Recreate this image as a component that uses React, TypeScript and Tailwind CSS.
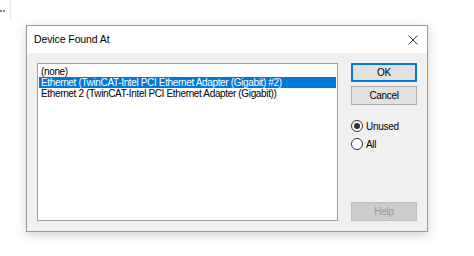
import React from "react";

const items = [
  "(none)",
  "Ethernet (TwinCAT-Intel PCI Ethernet Adapter (Gigabit) #2)",
  "Ethernet 2 (TwinCAT-Intel PCI Ethernet Adapter (Gigabit))",
];

function Radio({ checked, label }: { checked: boolean; label: string }) {
  return (
    <div className="flex h-[18px] items-center">
      <div className="flex h-[12px] w-[12px] items-center justify-center rounded-full border border-[#333333] bg-white">
        {checked && <div className="h-[6px] w-[6px] rounded-full bg-[#333333]" />}
      </div>
      <span className="ml-[3px] text-[10px] leading-[11px] tracking-[-0.3px] text-black">{label}</span>
    </div>
  );
}

export default function App() {
  return (
    <div
      className="h-[256px] w-[474px] overflow-hidden bg-white"
      style={{ fontFamily: '"Liberation Sans", Arial, sans-serif' }}
    >
      <div className="flex h-[25px]">
        <div className="flex h-[21px] w-[10px] items-center">
          <div className="h-[2px] w-[5px] border-l-2 border-r-2 border-[#7a7a90]" />
        </div>
        <div className="h-[21px] w-px bg-[#e8e8e8]" />
      </div>
      <div className="ml-[26px] flex h-[207px] w-[402px] flex-col border border-[#9a9a9a] bg-white shadow-[0_3px_10px_rgba(0,0,0,0.18)]">
        <div className="flex h-[27px] items-center justify-between pl-[7px] pr-[9px]">
          <span className="text-[10.5px] tracking-[-0.1px] text-black">Device Found At</span>
          <svg width="10" height="10" viewBox="0 0 10 10" className="mt-[1px]">
            <path d="M0.5 0.5 L9.5 9.5 M9.5 0.5 L0.5 9.5" stroke="#333" strokeWidth="1" fill="none" />
          </svg>
        </div>
        <div className="flex flex-1 bg-[#f0f0f0] px-[10px] py-[10px]">
          <div className="flex h-[158px] w-[301px] flex-col border border-[#a0a0a0] bg-white pt-[2px]">
            {items.map((t, i) => (
              <div
                key={t}
                className={
                  "mx-px h-[11px] whitespace-nowrap pl-[2px] text-[10px] leading-[11px] tracking-[-0.35px] " +
                  (i === 1 ? "bg-[#0078d7] text-white" : "text-black")
                }
              >
                {t}
              </div>
            ))}
          </div>
          <div className="ml-[13px] flex w-[66px] flex-col">
            <button className="flex h-[19px] items-center justify-center border border-[#0078d7] bg-[#e1e1e1] text-[10px] tracking-[-0.2px] text-black shadow-[inset_0_0_0_1px_#0078d7]">
              OK
            </button>
            <button className="mt-[4px] flex h-[19px] items-center justify-center border border-[#adadad] bg-[#e1e1e1] text-[10px] tracking-[-0.35px] text-black">
              Cancel
            </button>
            <div className="mt-[12px] flex flex-col">
              <Radio checked label="Unused" />
              <Radio checked={false} label="All" />
            </div>
            <button className="mt-auto flex h-[19px] items-center justify-center border border-[#bfbfbf] bg-[#cccccc] text-[10px] tracking-[-0.3px] text-[#9a9a9a]">
              Help
            </button>
          </div>
        </div>
      </div>
    </div>
  );
}
